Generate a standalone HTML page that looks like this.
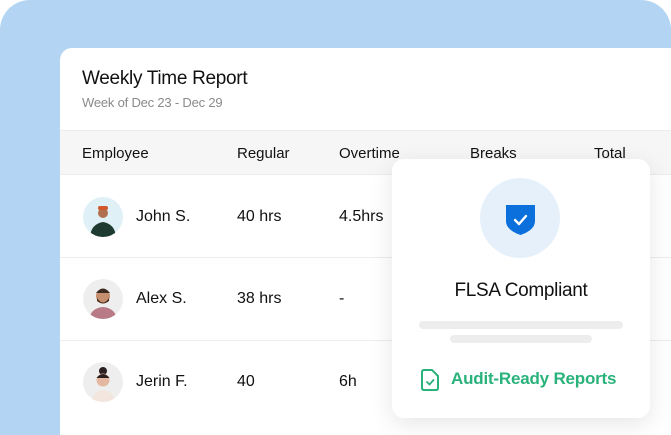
<!DOCTYPE html>
<html style="overflow:hidden;width:671px;height:435px"><head><style>
*{margin:0;padding:0;box-sizing:border-box}
body{width:671px;height:435px;overflow:hidden;background:#fff;font-family:"Liberation Sans",sans-serif;position:relative;color:#111}
.bg{position:absolute;left:0;top:0;width:671px;height:435px;background:#b3d5f3;border-radius:30px 30px 0 0}
.card{position:absolute;left:60px;top:48px;width:611px;height:387px;background:#fff;border-radius:12px 0 0 0;overflow:hidden}
.t{position:absolute;font-size:16px;white-space:nowrap}
.hdr{position:absolute;left:0;top:82px;width:100%;height:45px;background:#f6f6f6;border-top:1px solid #ececec;border-bottom:1px solid #ececec}
.sep{position:absolute;left:0;width:100%;height:1px;background:#ececec}
.av{position:absolute;left:23px;width:40px;height:40px;border-radius:50%;overflow:hidden}
.pop{position:absolute;left:392px;top:159px;width:258px;height:259px;background:#fff;border-radius:12px;box-shadow:0 6px 24px rgba(0,0,0,.10)}
</style></head><body>
<div class="bg"></div>
<div class="card">
<div class="t" style="left:22px;top:20px;font-size:19px;letter-spacing:-.3px">Weekly Time Report</div>
<div class="t" style="left:22px;top:47px;font-size:13px;color:#8a8a8a;letter-spacing:-.2px">Week of Dec 23 - Dec 29</div>
<div class="hdr"></div>
<div class="t" style="left:22px;top:97px;font-size:15px">Employee</div>
<div class="t" style="left:177px;top:97px;font-size:15px">Regular</div>
<div class="t" style="left:279px;top:97px;font-size:15px">Overtime</div>
<div class="t" style="left:410px;top:97px;font-size:15px">Breaks</div>
<div class="t" style="left:534px;top:97px;font-size:15px">Total</div>

<div class="av" style="top:149px;background:#dff0f6"><svg width="40" height="40"><circle cx="20" cy="16" r="5" fill="#b07050"/><rect x="15" y="9" width="10" height="4" rx="2" fill="#d0582a"/><path d="M7 40 Q8 27 20 25 Q32 27 33 40Z" fill="#1f3a30"/></svg></div>
<div class="t" style="left:76px;top:160px">John S.</div>
<div class="t" style="left:177px;top:160px">40 hrs</div>
<div class="t" style="left:279px;top:160px">4.5hrs</div>
<div class="sep" style="top:209px"></div>

<div class="av" style="top:231px;background:#eee"><svg width="40" height="40"><circle cx="20" cy="17" r="7" fill="#c58e6e"/><path d="M13 14 Q20 5 27 14Z" fill="#3a2a20"/><path d="M14 19 Q20 28 26 19 L26 22 Q20 27 14 22Z" fill="#4a3020"/><path d="M6 40 Q8 29 20 28 Q32 29 34 40Z" fill="#b87a86"/></svg></div>
<div class="t" style="left:76px;top:242px">Alex S.</div>
<div class="t" style="left:177px;top:242px">38 hrs</div>
<div class="t" style="left:279px;top:242px">-</div>
<div class="sep" style="top:292px"></div>

<div class="av" style="top:314px;background:#eee"><svg width="40" height="40"><circle cx="20" cy="9" r="4" fill="#2a2020"/><circle cx="20" cy="18" r="6.5" fill="#e4b8a0"/><path d="M13.5 16 Q20 8 26.5 16Z" fill="#2a2020"/><path d="M8 40 Q10 29 20 28 Q30 29 32 40Z" fill="#f2e6de"/></svg></div>
<div class="t" style="left:76px;top:325px">Jerin F.</div>
<div class="t" style="left:177px;top:325px">40</div>
<div class="t" style="left:279px;top:325px">6h</div>
</div>

<div class="pop">
<div style="position:absolute;left:88px;top:19px;width:80px;height:80px;border-radius:50%;background:#e5f0fb"></div>
<svg style="position:absolute;left:113px;top:45px" width="31" height="32" viewBox="0 0 31 32"><path d="M1 1 H30 V17 Q30 26 15.5 31 Q1 26 1 17Z" fill="#0b6fdc"/><path d="M10 16 L14 20 L21 12" stroke="#fff" stroke-width="2.4" fill="none" stroke-linecap="round" stroke-linejoin="round"/></svg>
<div style="position:absolute;left:0;width:100%;top:121px;text-align:center;font-size:19px;letter-spacing:-.3px">FLSA Compliant</div>
<div style="position:absolute;left:27px;top:162px;width:204px;height:8px;border-radius:4px;background:#ededed"></div>
<div style="position:absolute;left:58px;top:176px;width:142px;height:8px;border-radius:4px;background:#ededed"></div>
<svg style="position:absolute;left:28px;top:210px" width="20" height="22" viewBox="0 0 20 22"><path d="M2 3 Q2 1 4 1 H12 L18 7 V19 Q18 21 16 21 H4 Q2 21 2 19Z" stroke="#2ab27b" stroke-width="2" fill="none" stroke-linejoin="round"/><path d="M7 13 L9.5 15.5 L13.5 11" stroke="#2ab27b" stroke-width="1.8" fill="none" stroke-linecap="round"/></svg>
<div style="position:absolute;left:59px;top:210px;font-size:17px;font-weight:bold;color:#2ab27b;letter-spacing:-.2px">Audit-Ready Reports</div>
</div>
</body></html>
